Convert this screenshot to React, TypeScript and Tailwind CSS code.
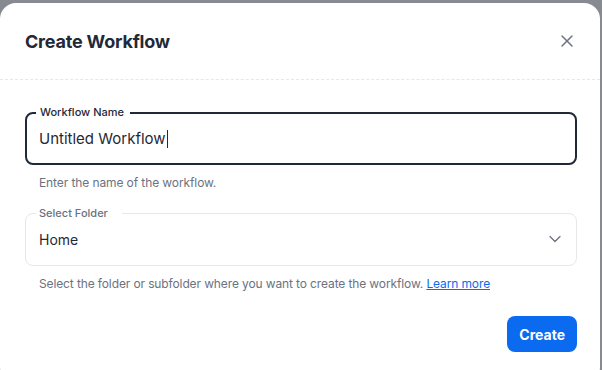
import { X, ChevronDown } from "lucide-react";

export default function App() {
  return (
    <div className="w-[602px] h-[370px] bg-[#878b91] pt-[3px] pr-[2px] overflow-hidden font-['Inter',sans-serif]">
      <div className="w-[600px] h-[380px] bg-white rounded-[16px] flex flex-col">
        <div className="flex items-center justify-between pl-[25px] pr-[23px] h-[77px] border-b border-dashed border-[#e5e7eb]">
          <h2 className="text-[18px] font-bold text-[#1f2937] tracking-[-0.2px]">Create Workflow</h2>
          <X className="w-[20px] h-[20px] text-[#6b7280]" strokeWidth={1.75} />
        </div>
        <div className="pl-[25px] pr-[23px] pt-[26px] flex flex-col">
          <fieldset className="border-2 border-[#1f2937] rounded-[8px] h-[59px] pl-[9px] pr-[12px]">
            <legend className="pl-[4px] pr-[6px] text-[11px] font-medium text-[#1f2937] leading-[13px]">Workflow Name</legend>
            <div className="flex items-center h-[48px] -mt-[4px] ml-[3px] text-[15px] text-[#1f2937]">
              Untitled Workflow<span className="w-[1px] h-[18px] bg-[#1f2937] ml-[1px]" />
            </div>
          </fieldset>
          <p className="text-[12px] text-[#6b7280] pl-[14px] mt-[10px] leading-[16px] tracking-[-0.1px]">Enter the name of the workflow.</p>
          <fieldset className="border border-[#e5e7eb] rounded-[8px] h-[59px] pl-[10px] pr-[11px] mt-[16px]">
            <legend className="pl-[3px] pr-[14px] text-[11px] font-medium text-[#6b7280] leading-[13px]">Select Folder</legend>
            <div className="flex items-center justify-between h-[48px] -mt-[5px] ml-[3px] text-[14px] text-[#1f2937]">
              <span>Home</span>
              <ChevronDown className="w-[20px] h-[20px] text-[#6b7280]" strokeWidth={1.5} />
            </div>
          </fieldset>
          <p className="text-[12px] text-[#6b7280] pl-[14px] mt-[10px] leading-[16px] tracking-[-0.12px]">
            Select the folder or subfolder where you want to create the workflow.{" "}
            <a className="text-[#0b6bf0] underline">Learn more</a>
          </p>
          <div className="flex justify-end mt-[24px]">
            <button className="h-[36px] px-[12px] rounded-[8px] bg-[#0b6bf0] text-white text-[14px] font-bold">Create</button>
          </div>
        </div>
      </div>
    </div>
  );
}
